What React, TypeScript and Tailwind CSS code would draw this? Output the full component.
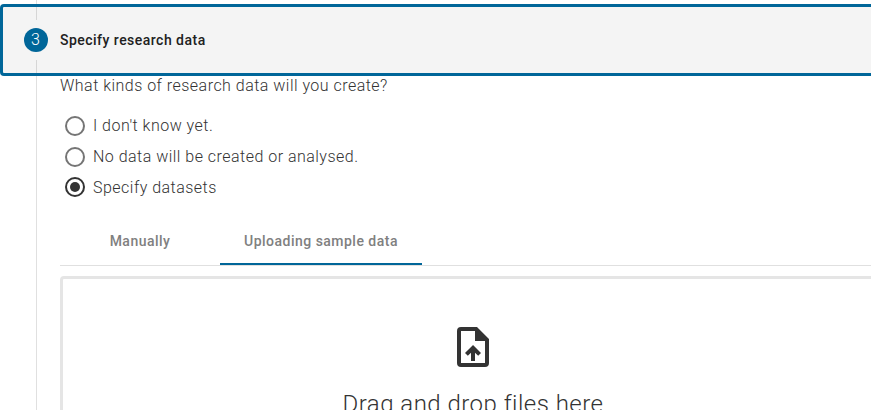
export default function App() {
  const options = ["I don't know yet.", 'No data will be created or analysed.', 'Specify datasets'];
  return (
    <div className="h-[410px] w-[871px] overflow-hidden bg-white font-['Roboto',sans-serif] text-[#333]">
      <div className="ml-9 h-1 border-l border-[#e0e0e0]" />
      <header className="flex h-[72px] w-[880px] items-center rounded border-[3px] border-[#006699] bg-[#f4f4f4] pl-[21px]">
        <div className="flex h-full w-6 flex-col items-center justify-between">
          <span className="ml-px h-[13px] w-px bg-[#d6d6d6]" />
          <span className="flex size-6 items-center justify-center rounded-full bg-[#006699] pr-px text-base font-light text-white">3</span>
          <span className="ml-px h-[13px] w-px bg-[#d6d6d6]" />
        </div>
        <span className="ml-3 text-sm font-medium tracking-[0.48px] text-[#212121]">Specify research data</span>
      </header>
      <main className="ml-9 h-[334px] border-l border-[#e0e0e0] pl-[23px]">
        <p className="text-base leading-[20px] font-light tracking-[0.48px]">What kinds of research data will you create?</p>
        <div className="mt-[14px]">
          {options.map((label, i) => (
            <label key={label} className="flex h-[31px] items-center pl-[5px]">
              <span className={`flex size-5 items-center justify-center rounded-full border-2 ${i === 2 ? 'mb-0.5 border-[#333]' : 'border-[#757575]'}`}>
                {i === 2 && <span className="size-[10px] rounded-full bg-[#333]" />}
              </span>
              <span className="ml-2 text-base font-light tracking-[0.48px]">{label}</span>
            </label>
          ))}
        </div>
        <nav className="mt-[14px] flex h-[49px] w-[840px] border-b border-[#e0e0e0] text-sm font-medium tracking-[0.48px] text-[#808080]">
          <span className="flex w-40 items-center justify-center">Manually</span>
          <span className="flex w-[202px] items-center justify-center border-b-2 border-[#006699] pt-0.5">Uploading sample data</span>
        </nav>
        <section className="mt-[10px] flex h-[220px] w-[826px] flex-col items-center rounded border-[3px] border-[#e5e5e5] pt-12">
          <svg className="h-10 w-8" viewBox="4 2 16 20" fill="#333">
            <path d="M14 2H6a2 2 0 0 0-2 2v16a2 2 0 0 0 2 2h12a2 2 0 0 0 2-2V8l-6-6Zm4 18H6V4h7v5h5v11ZM8 15.01l1.41 1.41L11 14.84V19h2v-4.16l1.59 1.59L16 15.01 12.01 11 8 15.01Z" />
          </svg>
          <p className="mt-[21px] text-2xl leading-8 font-light tracking-[0.48px]">Drag and drop files here</p>
        </section>
      </main>
    </div>
  );
}
